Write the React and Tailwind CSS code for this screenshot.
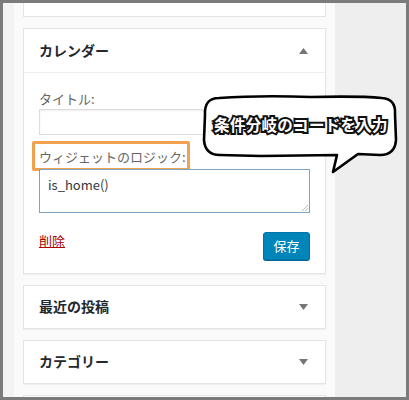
import React from 'react';

const font = { fontFamily: '"Noto Sans CJK JP", "Noto Sans", sans-serif' };

const Arrow = ({ up }) => (
  <svg width="9" height="6" viewBox="0 0 9 6" className="text-[#72777c]">
    {up ? <path d="M0 6 L4.5 0 L9 6 Z" fill="currentColor" /> : <path d="M0 0 L4.5 6 L9 0 Z" fill="currentColor" />}
  </svg>
);

const ClosedWidget = ({ title }) => (
  <div className="shrink-0 h-[44px] bg-white border border-[#e5e5e5] shadow-[0_1px_1px_rgba(0,0,0,0.04)] flex items-center justify-between pl-[15px] pr-[17px]">
    <span className="text-[14px] font-semibold text-[#23282d]">{title}</span>
    <Arrow />
  </div>
);

const Callout = () => (
  <div className="absolute left-[198px] top-[90px] w-[200px] h-[85px]">
    <svg width="200" height="85" viewBox="0 0 200 85" className="absolute inset-0">
      <path
        d="M18 5 Q60 2 110 4 Q160 3 181 5 Q195 6 194 21 L195 47 Q194 62 179 62 L157 61 L132 79 L136 62 L60 63 L19 62 Q4 62 3 47 L4 22 Q3 5 18 5 Z"
        fill="white"
        stroke="black"
        strokeWidth="2.6"
        strokeLinejoin="round"
      />
    </svg>
    <div className="absolute left-0 right-0 top-[20px] text-center text-[15.5px] font-bold text-white tracking-[0.3px] [paint-order:stroke_fill] [-webkit-text-stroke:4px_#111]">
      条件分岐のコードを入力
    </div>
  </div>
);

export default function App() {
  return (
    <div style={font} className="relative w-[409px] h-[400px] border-[3px] border-[#7b7b7b] bg-[#f1f1f1] flex overflow-hidden">
      <div className="w-[11px] bg-[#f3f3f3]" />
      <div className="w-[321px] bg-[#fafafa] px-[9px] flex flex-col gap-[11px]">
        <div className="shrink-0 h-[14px] bg-white border border-t-0 border-[#e5e5e5]" />

        <div className="shrink-0 bg-white border border-[#e5e5e5] shadow-[0_1px_1px_rgba(0,0,0,0.04)]">
          <div className="h-[44px] flex items-center justify-between pl-[15px] pr-[17px] border-b border-[#eeeeee]">
            <span className="text-[14px] font-semibold text-[#23282d]">カレンダー</span>
            <Arrow up />
          </div>
          <div className="px-[15px] pt-[17px] pb-[12px]">
            <div className="text-[13px] text-[#666] leading-[18px]">タイトル:</div>
            <div className="mt-[1px] h-[26px] border border-[#dddddd] shadow-[inset_0_1px_2px_rgba(0,0,0,0.07)] bg-white" />
            <div className="mt-[13px] relative w-fit">
              <span className="text-[13px] text-[#666] leading-[18px] block">ウィジェットのロジック:</span>
              <div className="absolute left-[-7px] right-[-4px] top-[-7px] bottom-[-5px] border-[3px] border-[#f2a14f] rounded-[2px]" />
            </div>
            <div className="mt-[3px] h-[44px] border border-[#7ea4c4] bg-white relative px-[8px] pt-[1px]">
              <span className="text-[13px] text-[#32373c]">is_home()</span>
              <svg width="6" height="6" viewBox="0 0 6 6" className="absolute right-[1px] bottom-[1px]">
                <path d="M0 6 L6 0 M3 6 L6 3" stroke="#aaa" strokeWidth="0.8" />
              </svg>
            </div>
            <div className="mt-[18px] flex items-center justify-between">
              <span className="text-[13px] text-[#a00] underline mb-[10px]">削除</span>
              <button className="h-[28px] w-[47px] bg-[#0085ba] border border-[#0073aa] rounded-[3px] text-white text-[13px] shadow-[0_1px_0_#006799]">
                保存
              </button>
            </div>
          </div>
        </div>

        <ClosedWidget title="最近の投稿" />
        <ClosedWidget title="カテゴリー" />
        <div className="shrink-0 h-[20px] bg-white border border-[#e5e5e5]" />
      </div>
      <div className="flex-1 bg-[#eeeeee]" />
      <Callout />
    </div>
  );
}
